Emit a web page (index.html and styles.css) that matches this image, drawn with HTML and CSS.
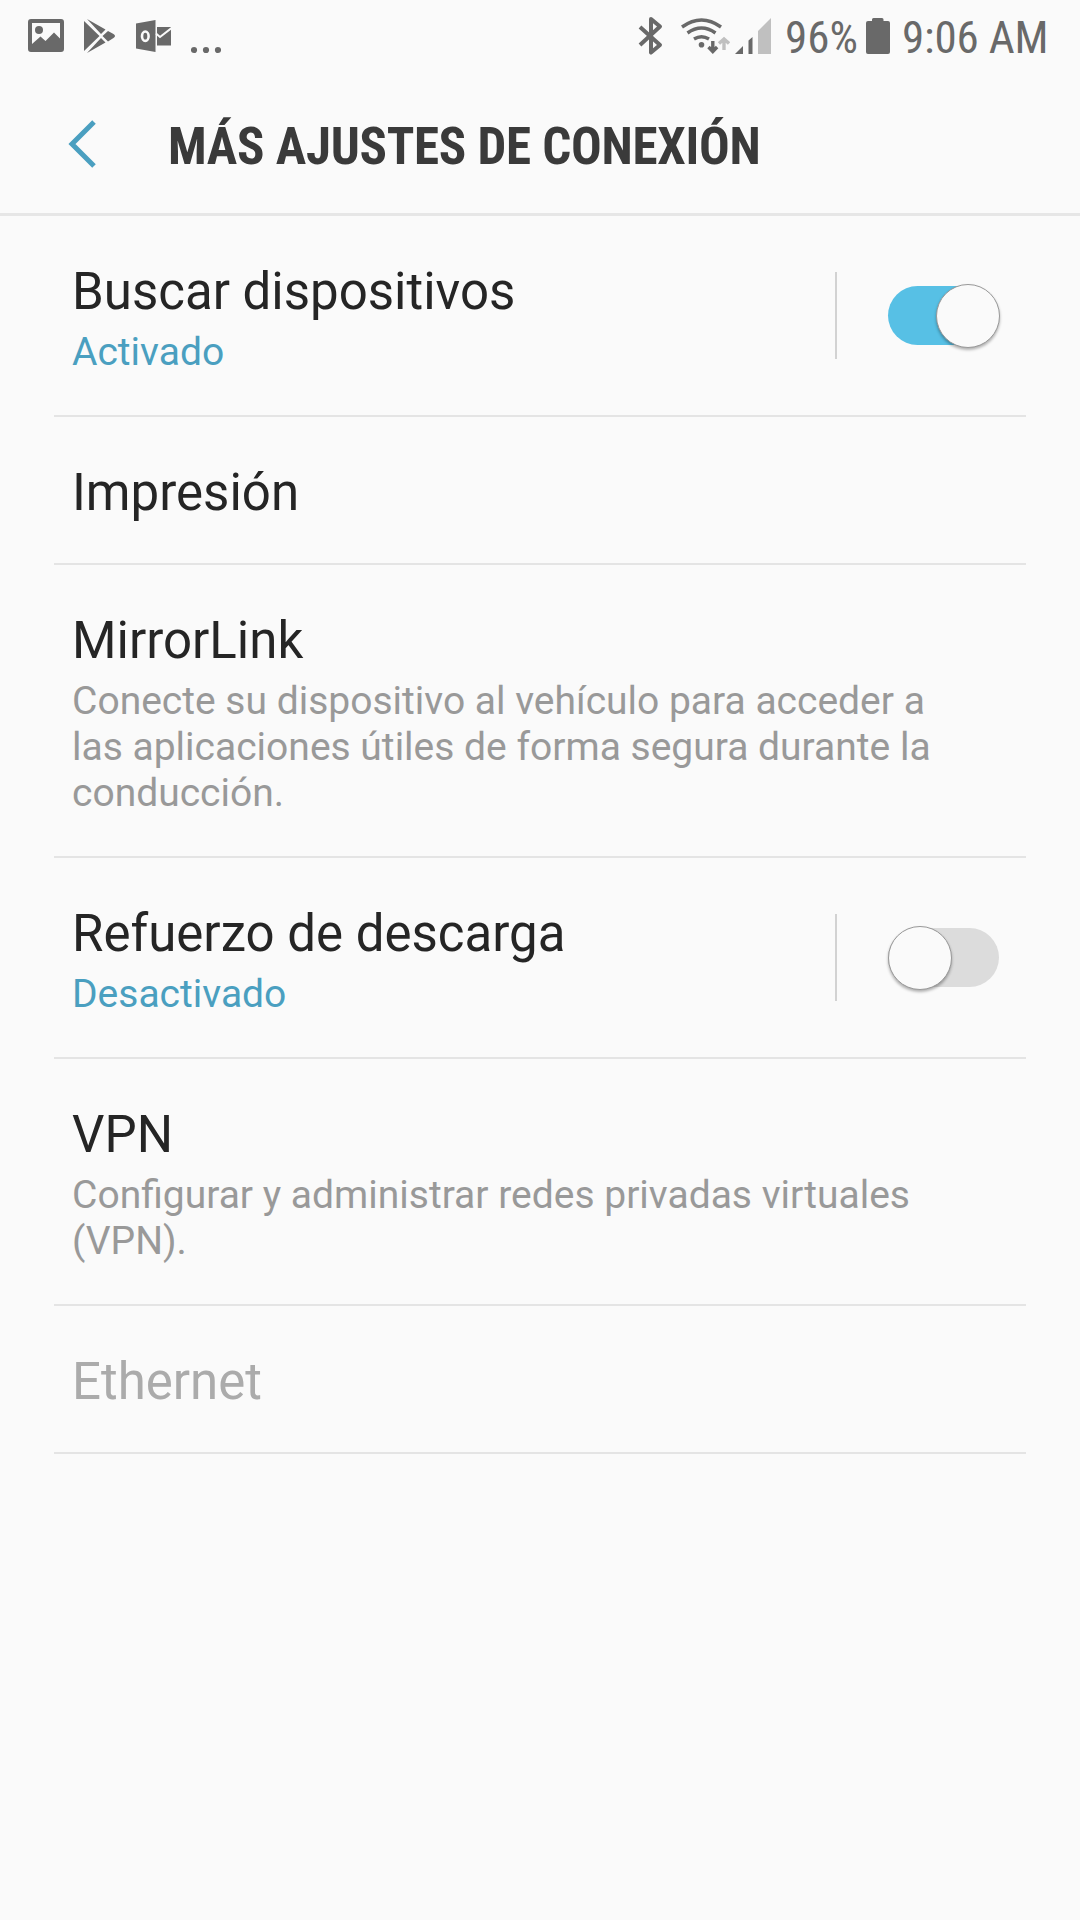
FILE: index.html
```html
<!DOCTYPE html>
<html lang="es">
<head>
    <meta charset="UTF-8">
    <title>Más ajustes de conexión</title>
    <link rel="stylesheet" href="styles.css">
</head>
<body>
    <div class="status-bar">
        <div class="status-left">
            <!-- gallery -->
            <svg width="36" height="72" viewBox="28 0 36 72">
                <path fill-rule="evenodd" d="M31 19h30a3 3 0 0 1 3 3v27a3 3 0 0 1-3 3H31a3 3 0 0 1-3-3V22a3 3 0 0 1 3-3zM32 23v21l8.500-7.500 5 4.500 8.500-8.500 6 6V23z"/>
                <circle cx="39" cy="30" r="4"/>
            </svg>
            <!-- play store -->
            <svg width="32" height="72" viewBox="85 0 32 72">
                <path d="M85 21l15.500 15L85 51zM88 19l18.500 10.500-4.500 4.500zM88 53l14-15 4.500 4.500zM109 31l5.500 3q3 2 0 4l-5.500 3.500-5.500-5.500z"/>
            </svg>
            <!-- outlook -->
            <svg width="35" height="72" viewBox="136 0 35 72">
                <path d="M136 23.500l19.500-3.500v32L136 48.500zM157 27h14v18.500h-14z"/>
                <ellipse class="cut" cx="145.300" cy="36.200" rx="3.300" ry="4.700"/>
                <path class="cut thin" d="M156 33.500l4 3.500 11.500-9"/>
            </svg>
            <svg width="30" height="72" viewBox="191 0 30 72">
                <circle cx="194" cy="50" r="3.100"/><circle cx="206" cy="50" r="3.100"/><circle cx="218" cy="50" r="3.100"/>
            </svg>
        </div>
        <div class="status-right">
            <svg class="bluetooth" width="25" height="72" viewBox="638 0 25 72">
                <path class="line" stroke-linejoin="round" d="M640 27l20 18-9 7.500v-33.500l9 7.500-20 18.500"/>
            </svg>
            <svg class="wifi" width="49" height="72" viewBox="681 0 49 72">
                <path class="line wave" d="M682 27q19.500-14 39 0M687.500 33q14-10 28 0M694 39q7.500-4.500 15 0"/>
                <circle cx="701.500" cy="44.700" r="2.800"/>
                <path class="line wave" d="M712.800 41v10.500M708.500 47l4.300 4.500 4.300-4.500"/>
                <path class="line wave light-line" d="M724 50V39M719 43.500l5-4.500 5 4.500"/>
            </svg>
            <svg class="signal" width="36" height="72" viewBox="735 0 36 72">
                <path d="M735 54l8-8v8zM748.500 40.500l4-3.500v17h-4z"/>
                <path class="light" d="M758 31l13-13v36h-13z"/>
            </svg>
            <span class="percent">96%</span>
            <svg class="battery" width="24" height="72" viewBox="866 0 24 72">
                <path d="M868 21h4v-1.500q0-1.500 1.500-1.500h8.500q1.500 0 1.500 1.500V21h4.500q2 0 2 2v29q0 2-2 2h-20q-2 0-2-2V23q0-2 2-2z"/>
            </svg>
            <span class="clock">9:06 AM</span>
        </div>
    </div>

    <header class="app-bar">
        <svg class="back" width="30" height="50" viewBox="0 0 30 50">
            <path d="M27 3L5 25l22 22"/>
        </svg>
        <h1>MÁS AJUSTES DE CONEXIÓN</h1>
    </header>

    <main class="settings">
        <div class="row">
            <div class="text">
                <div class="title">Buscar dispositivos</div>
                <div class="summary state">Activado</div>
            </div>
            <div class="toggle-area">
                <div class="toggle on"><span class="knob"></span></div>
            </div>
        </div>
        <div class="row">
            <div class="text">
                <div class="title">Impresión</div>
            </div>
        </div>
        <div class="row">
            <div class="text">
                <div class="title">MirrorLink</div>
                <div class="summary">Conecte su dispositivo al vehículo para acceder a las aplicaciones útiles de forma segura durante la conducción.</div>
            </div>
        </div>
        <div class="row">
            <div class="text">
                <div class="title">Refuerzo de descarga</div>
                <div class="summary state">Desactivado</div>
            </div>
            <div class="toggle-area">
                <div class="toggle"><span class="knob"></span></div>
            </div>
        </div>
        <div class="row">
            <div class="text">
                <div class="title">VPN</div>
                <div class="summary">Configurar y administrar redes privadas virtuales (VPN).</div>
            </div>
        </div>
        <div class="row disabled">
            <div class="text">
                <div class="title">Ethernet</div>
            </div>
        </div>
    </main>
</body>
</html>
```
FILE: styles.css
```css
* {
    box-sizing: border-box;
}
body {
    margin: 0;
    min-height: 100vh;
    background: #fafafa;
    color: #252525;
    font-family: Roboto, sans-serif;
}

/* status bar */
.status-bar {
    display: flex;
    justify-content: space-between;
    height: 72px;
    padding: 0 33px 0 28px;
    color: #696969;
}
.status-left,
.status-right {
    display: flex;
}
.status-left {
    gap: 20px;
}
.status-bar svg {
    fill: #696969;
    flex: none;
}
.status-bar .cut {
    fill: none;
    stroke: #fafafa;
    stroke-width: 2.6;
}
.status-bar .thin {
    stroke-width: 2;
}
.status-bar .line {
    fill: none;
    stroke: #696969;
    stroke-width: 4;
}
.status-bar .wave {
    stroke-width: 3.4;
}
.status-bar .light-line {
    stroke: #c0c0c0;
}
.status-bar .light {
    fill: #c0c0c0;
}
.wifi {
    margin-left: 18px;
}
.signal {
    margin-left: 5px;
}
.percent,
.clock {
    font-family: "Roboto Condensed", Roboto, sans-serif;
    font-stretch: 75%;
    font-size: 45px;
    line-height: 76px;
    white-space: nowrap;
}
.percent {
    width: 81px;
    margin-left: 14px;
}
.clock {
    width: 145px;
    margin-left: 12px;
    letter-spacing: -0.15px;
}

/* title bar */
.app-bar {
    display: flex;
    align-items: center;
    height: 144px;
    padding-left: 67px;
    border-bottom: 3px solid #e6e6e6;
}
.back {
    margin-top: 2px;
    fill: none;
    stroke: #4a9fc0;
    stroke-width: 5;
}
h1 {
    margin: 9px 0 0 71px;
    color: #3a3a3a;
    font-family: "Roboto Condensed", Roboto, sans-serif;
    font-stretch: 75%;
    font-size: 51px;
    font-weight: bold;
    letter-spacing: -0.28px;
    line-height: 60px;
    white-space: nowrap;
}

/* list */
.settings {
    padding: 0 54px;
}
.row {
    display: flex;
    align-items: center;
    border-bottom: 2px solid #e4e4e4;
}
.text {
    flex: 1;
    padding: 46px 80px 40px 18px;
}
.title {
    font-size: 51px;
    line-height: 60px;
}
.summary {
    margin-top: 7px;
    color: #999;
    font-size: 39px;
    line-height: 46px;
}
.state {
    color: #4a9fc0;
}
.disabled .title {
    color: #ababab;
}
.toggle-area {
    display: flex;
    align-items: center;
    width: 191px;
    height: 87px;
    padding-left: 51px;
    border-left: 2px solid #d2d2d2;
}
.toggle {
    display: flex;
    align-items: center;
    width: 111px;
    height: 59px;
    border-radius: 30px;
    background: #dcdcdc;
}
.toggle.on {
    justify-content: flex-end;
    background: #57c0e5;
}
.knob {
    flex: none;
    width: 64px;
    height: 64px;
    border: 1px solid #999;
    border-radius: 50%;
    background: #fafafa;
    box-shadow: 0 2px 3px rgba(0, 0, 0, 0.3);
}
.on .knob {
    margin-right: -1px;
}
```
